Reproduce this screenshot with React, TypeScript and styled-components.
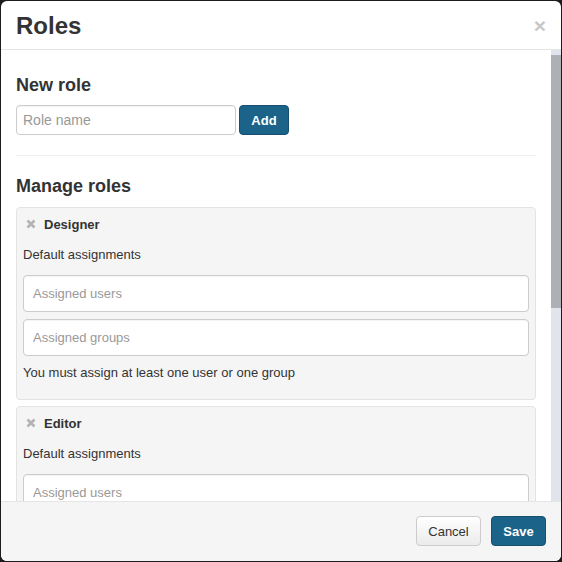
import React from "react";
import styled, { createGlobalStyle } from "styled-components";

const Global = createGlobalStyle`
  html, body { margin: 0; padding: 0; background: #1c1c1c; }
  body { font-family: "Liberation Sans", Arial, sans-serif; color: #333; }
  * { box-sizing: border-box; }
`;

const Modal = styled.div`
  margin: 1px;
  width: 560px;
  height: 560px;
  background: #fff;
  border-radius: 6px;
  overflow: hidden;
  display: flex;
  flex-direction: column;
`;

const Header = styled.div`
  height: 49px;
  flex: none;
  border-bottom: 1px solid #e5e5e5;
  display: flex;
  align-items: center;
  justify-content: space-between;
  padding: 1px 15px 0;
`;

const Title = styled.h1`
  margin: 0;
  font-size: 24px;
  font-weight: bold;
  color: #333;
  line-height: 26px;
`;

const Close = styled.button`
  border: 0;
  background: none;
  padding: 0;
  font-family: "Liberation Sans", Arial, sans-serif;
  font-size: 21px;
  font-weight: bold;
  line-height: 1;
  color: #c8c8c8;
  cursor: pointer;
`;

const BodyFrame = styled.div`
  flex: 1;
  min-height: 0;
  display: flex;
`;

const Body = styled.div`
  flex: 1;
  min-width: 0;
  overflow: hidden;
  padding: 15px 15px 30px 15px;
`;

const ScrollTrack = styled.div`
  flex: none;
  width: 10px;
  background: #e1e4ec;
  padding-top: 5px;
`;

const ScrollThumb = styled.div`
  height: 253px;
  background: #adb0b4;
`;

const SectionTitle = styled.h4`
  margin: 10px 0 10px;
  font-size: 18px;
  line-height: 20px;
  font-weight: bold;
  color: #333;
`;

const AddRow = styled.div`
  display: flex;
  gap: 3px;
  align-items: stretch;
`;

const TextInput = styled.input<{ $wide?: boolean; $h?: number }>`
  display: block;
  width: ${(p) => (p.$wide ? "100%" : "220px")};
  height: ${(p) => p.$h ?? 30}px;
  border: 1px solid #ccc;
  border-radius: 4px;
  background: #fff;
  padding: 0 ${(p) => (p.$wide ? 9 : 6)}px;
  font-family: "Liberation Sans", Arial, sans-serif;
  font-size: ${(p) => (p.$wide ? 13 : 14)}px;
  color: #555;
  box-shadow: inset 0 1px 1px rgba(0, 0, 0, 0.05);
  outline: none;
  &::placeholder { color: #999; }
`;

const PrimaryButton = styled.button<{ $w: number }>`
  width: ${(p) => p.$w}px;
  height: 30px;
  border: 1px solid #164f70;
  border-radius: 4px;
  background: #1c6389;
  color: #fff;
  font-family: "Liberation Sans", Arial, sans-serif;
  font-size: 13px;
  font-weight: bold;
  padding: 0;
`;

const DefaultButton = styled.button`
  width: 65px;
  height: 30px;
  border: 1px solid #ccc;
  border-radius: 4px;
  background: linear-gradient(#fff, #ebebeb);
  color: #333;
  font-family: "Liberation Sans", Arial, sans-serif;
  font-size: 13px;
  padding: 0;
`;

const Divider = styled.hr`
  border: 0;
  border-top: 1px solid #eee;
  margin: 20px 0;
`;

const RoleList = styled.div`
  display: flex;
  flex-direction: column;
  gap: 6px;
  margin-top: 11px;
`;

const RoleCard = styled.div`
  background: #f5f5f5;
  border: 1px solid #e3e3e3;
  border-radius: 4px;
  padding: 8px 6px 18px 6px;
`;

const RoleHead = styled.div`
  display: flex;
  align-items: center;
  gap: 8px;
  height: 16px;
  padding-left: 3px;
  font-size: 13px;
  font-weight: bold;
  color: #333;
`;

const Label = styled.div<{ $mt: number }>`
  margin-top: ${(p) => p.$mt}px;
  font-size: 13px;
  line-height: 16px;
  color: #333;
`;

const Fields = styled.div`
  margin-top: 12px;
  display: flex;
  flex-direction: column;
  gap: 7px;
`;

const Footer = styled.div`
  flex: none;
  height: 60px;
  border-top: 1px solid #e5e5e5;
  background: #f5f5f5;
  display: flex;
  align-items: center;
  justify-content: flex-end;
  gap: 10px;
  padding: 0 15px 1px 0;
`;

const RemoveIcon = () => (
  <svg width="10" height="10" viewBox="0 0 10 10">
    <path d="M1.5 1.5 L8.5 8.5 M8.5 1.5 L1.5 8.5" stroke="#b3b3b3" strokeWidth="2.6" strokeLinecap="butt" />
  </svg>
);

const roles = ["Designer", "Editor"];

export default function App() {
  return (
    <>
      <Global />
      <Modal>
        <Header>
          <Title>Roles</Title>
          <Close>×</Close>
        </Header>
        <BodyFrame>
          <Body>
            <SectionTitle>New role</SectionTitle>
            <AddRow>
              <TextInput placeholder="Role name" />
              <PrimaryButton $w={50}>Add</PrimaryButton>
            </AddRow>
            <Divider />
            <SectionTitle>Manage roles</SectionTitle>
            <RoleList>
              {roles.map((r) => (
                <RoleCard key={r}>
                  <RoleHead>
                    <RemoveIcon />
                    {r}
                  </RoleHead>
                  <Label $mt={15}>Default assignments</Label>
                  <Fields>
                    <TextInput $wide $h={37} placeholder="Assigned users" />
                    <TextInput $wide $h={37} placeholder="Assigned groups" />
                  </Fields>
                  <Label $mt={9}>You must assign at least one user or one group</Label>
                </RoleCard>
              ))}
            </RoleList>
          </Body>
          <ScrollTrack>
            <ScrollThumb />
          </ScrollTrack>
        </BodyFrame>
        <Footer>
          <DefaultButton>Cancel</DefaultButton>
          <PrimaryButton $w={55}>Save</PrimaryButton>
        </Footer>
      </Modal>
    </>
  );
}
